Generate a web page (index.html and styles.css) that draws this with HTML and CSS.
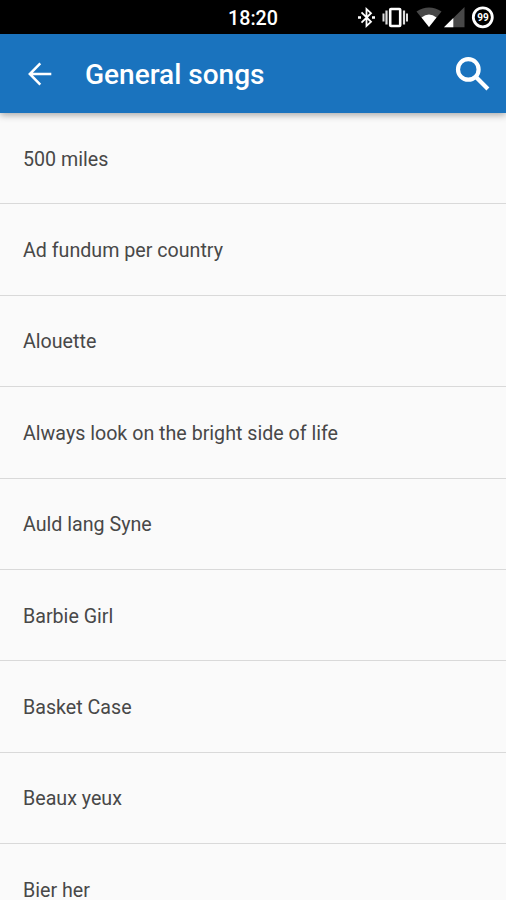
FILE: index.html
```html
<!DOCTYPE html>
<html lang="en">
<head>
<meta charset="utf-8">
<title>General songs</title>
<link rel="stylesheet" href="styles.css">
</head>
<body>
<div class="status">
  <span class="clock">18:20</span>
  <svg class="status-icons" width="146" height="34" viewBox="0 0 146 34" fill="none" aria-hidden="true">
    <path d="M1.500 12.300 11 21.800 6.500 26V9l4.500 4.200-9.500 9.500" stroke="#fff" stroke-width="1.800"/>
    <path d="M-2 17.500h3M12 17.500h3" stroke="#fff" stroke-width="2.600"/>
    <rect x="30.200" y="9" width="10" height="17" rx=".8" stroke="#fff" stroke-width="2.600"/>
    <path d="M26.500 10.500v14M44 10.500v14" stroke="#ddd" stroke-width="2.200"/>
    <path d="M23.500 13.500v8M47 13.500v8" stroke="#ddd" stroke-width="2"/>
    <path d="M56.500 11.500Q69 3.500 81.500 11.500L69 27Z" fill="#484848"/>
    <path d="M61.500 17.500Q69 11.500 76.500 17.500L69 27Z" fill="#fff"/>
    <path d="M84 27.300 104.500 7v20.300Z" fill="#484848"/>
    <path d="M84 27.300 93.300 18v9.300Z" fill="#fff"/>
    <circle cx="122.800" cy="17.300" r="9.500" stroke="#fff" stroke-width="2.800"/>
  </svg>
  <span class="battery">99</span>
</div>
<header class="toolbar">
  <svg class="back" width="24" height="24" viewBox="0 0 24 24" aria-hidden="true"><path d="M12.300 1.300 1.800 12l10.500 10.700M2 12h21.300"/></svg>
  <h1>General songs</h1>
  <svg class="search" width="36" height="36" viewBox="0 0 36 36" aria-hidden="true"><circle cx="13.300" cy="13.400" r="10.300"/><path d="m20.700 20.800 12.200 12.200"/></svg>
</header>
<ul class="songs">
  <li>500 miles</li>
  <li>Ad fundum per country</li>
  <li>Alouette</li>
  <li>Always look on the bright side of life</li>
  <li>Auld lang Syne</li>
  <li>Barbie Girl</li>
  <li>Basket Case</li>
  <li>Beaux yeux</li>
  <li>Bier her</li>
</ul>
</body>
</html>
```
FILE: styles.css
```css
* { box-sizing: border-box; }
body {
  margin: 0;
  height: 900px;
  overflow: hidden;
  background: #fafafa;
  font-family: Roboto, sans-serif;
}
.status {
  position: relative;
  height: 34px;
  background: #000;
  color: #fff;
  display: flex;
  justify-content: space-between;
  align-items: center;
}
.clock {
  margin-left: 228px;
  padding-top: 3px;
  font-size: 19.700px;
  line-height: 24px;
  font-weight: 500;
}
.status-icons { display: block; overflow: visible; }
.battery {
  position: absolute;
  top: 11px;
  left: 473px;
  width: 20px;
  font-size: 10px;
  line-height: 13px;
  font-weight: 700;
  text-align: center;
}
.toolbar {
  position: relative;
  height: 79px;
  padding: 0 15px 0 28px;
  background: #1a73be;
  color: #fff;
  display: flex;
  align-items: center;
  box-shadow: 0 2px 7px rgba(0, 0, 0, .34);
}
.toolbar svg { fill: none; stroke: #fff; }
.back { stroke-width: 2.500; }
.search { margin-left: auto; stroke-width: 4.200; }
h1 {
  margin: 3px 0 0 33px;
  font-size: 28px;
  line-height: 36px;
  font-weight: 500;
}
.songs {
  margin: 0;
  padding: 0;
  list-style: none;
}
.songs li {
  height: 91.400px;
  padding: 3px 23px 0;
  display: flex;
  align-items: center;
  border-bottom: 1px solid #d9d9d9;
  color: #484848;
  font-size: 19.650px;
  line-height: 24px;
}
```
